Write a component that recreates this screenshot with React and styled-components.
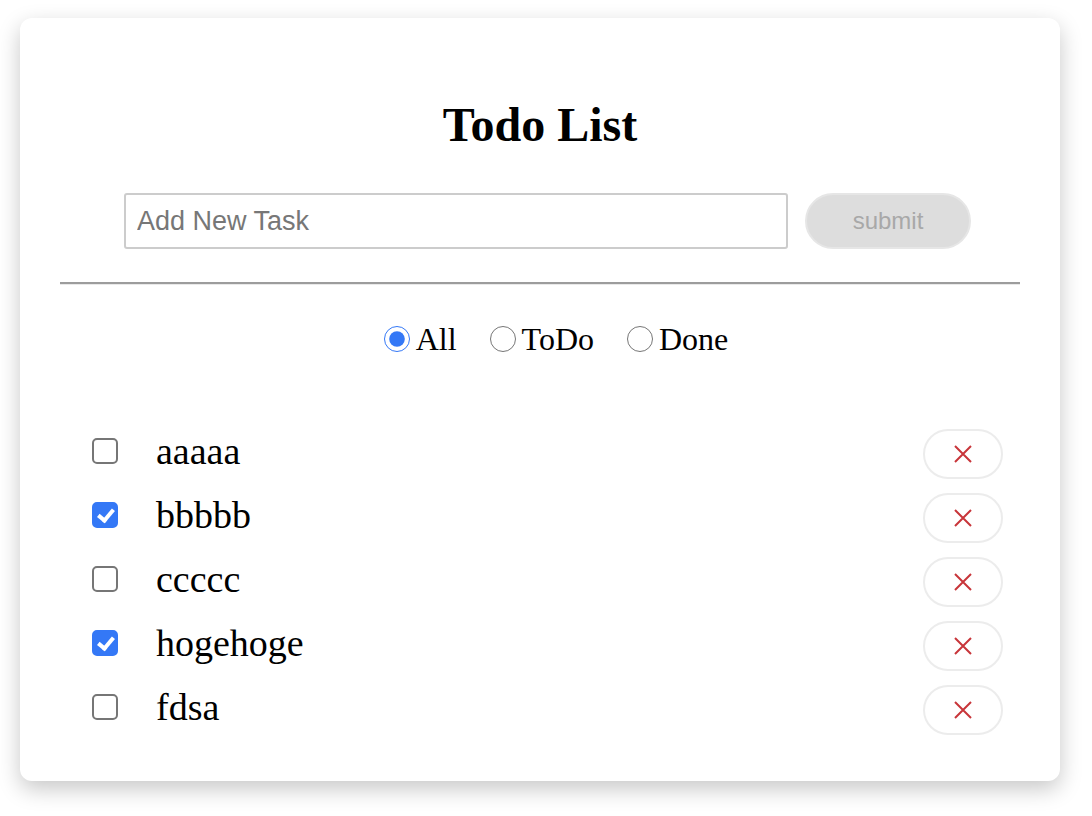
import React, { useState } from "react";
import styled, { createGlobalStyle } from "styled-components";

const Global = createGlobalStyle`
	body {
		margin: 0;
		padding-bottom: 34px;
		background: #fff;
		font-family: "Liberation Serif", "Times New Roman", serif;
	}
`;

const Card = styled.div`
	width: 1040px;
	margin: 18px 0 0 20px;
	box-sizing: border-box;
	padding: 79px 40px 42px;
	background: #fff;
	border-radius: 12px;
	box-shadow: 0 8px 22px rgba(0, 0, 0, 0.22);
`;

const Title = styled.h1`
	margin: 0;
	height: 56px;
	line-height: 56px;
	font-size: 48px;
	font-weight: bold;
	text-align: center;
`;

const Form = styled.form`
	display: flex;
	align-items: center;
	gap: 17px;
	margin-top: 40px;
	padding-left: 64px;
`;

const Input = styled.input`
	width: 664px;
	height: 56px;
	box-sizing: border-box;
	padding: 0 11px;
	border: 2px solid #ccc;
	border-radius: 3px;
	font-family: "Liberation Sans", Arial, sans-serif;
	font-size: 27px;
	outline: none;
	&::placeholder {
		color: #777;
	}
`;

const Submit = styled.button`
	width: 166px;
	height: 56px;
	border: 2px solid #e6e6e6;
	border-radius: 28px;
	background: #dddddd;
	color: #a8a8a8;
	font-family: "Liberation Sans", Arial, sans-serif;
	font-size: 24px;
`;

const Rule = styled.hr`
	margin: 33px 0 0;
	border: 0;
	border-top: 2px solid #9c9c9c;
	border-bottom: 1px solid #e9e9e9;
`;

const Filters = styled.div`
	display: flex;
	justify-content: center;
	gap: 33px;
	height: 40px;
	margin-top: 34px;
	padding-left: 32px;
`;

const FilterLabel = styled.label`
	display: flex;
	align-items: center;
	gap: 6px;
	font-size: 32px;
`;

const Radio = styled.input`
	width: 26px;
	height: 26px;
	margin: 0;
	accent-color: #3478f6;
`;

const List = styled.ul`
	list-style: none;
	margin: 60px 0 0;
	padding: 0;
`;

const Row = styled.li`
	display: flex;
	align-items: center;
	height: 64px;
	padding: 0 17px 0 32px;
`;

const Check = styled.input`
	appearance: none;
	position: relative;
	width: 26px;
	height: 26px;
	box-sizing: border-box;
	margin: 0 38px 0 0;
	border: 2px solid #767676;
	border-radius: 5px;
	background: #fff;
	&:checked {
		border-color: #3478f6;
		background: #3478f6;
	}
	&:checked::after {
		content: "";
		position: absolute;
		left: 7px;
		top: 2px;
		width: 6px;
		height: 12px;
		border: solid #fff;
		border-width: 0 4px 4px 0;
		transform: rotate(40deg);
	}
`;

const Name = styled.span`
	flex: 1;
	font-size: 38px;
`;

const Delete = styled.button`
	display: flex;
	align-items: center;
	justify-content: center;
	width: 80px;
	height: 50px;
	margin-top: 6px;
	border: 2px solid #ececec;
	border-radius: 25px;
	background: #fff;
	padding: 0;
`;

const Cross = () => (
	<svg width="20" height="20" viewBox="0 0 20 20">
		<path d="M2 2L18 18M18 2L2 18" stroke="#c8353a" strokeWidth="2" />
	</svg>
);

const initial = [
	{ name: "aaaaa", done: false },
	{ name: "bbbbb", done: true },
	{ name: "ccccc", done: false },
	{ name: "hogehoge", done: true },
	{ name: "fdsa", done: false },
];

export default function App() {
	const [todos, setTodos] = useState(initial);
	const [filter, setFilter] = useState("all");

	const toggle = i =>
		setTodos(todos.map((t, j) => (j === i ? { ...t, done: !t.done } : t)));

	return (
		<>
			<Global />
			<Card>
				<Title>Todo List</Title>
				<Form onSubmit={e => e.preventDefault()}>
					<Input placeholder="Add New Task" />
					<Submit type="submit" disabled>submit</Submit>
				</Form>
				<Rule />
				<Filters>
					{[
						["all", "All"],
						["todo", "ToDo"],
						["done", "Done"],
					].map(([v, label]) => (
						<FilterLabel key={v}>
							<Radio
								type="radio"
								name="filter"
								checked={filter === v}
								onChange={() => setFilter(v)}
							/>
							{label}
						</FilterLabel>
					))}
				</Filters>
				<List>
					{todos.map((t, i) => (
						<Row key={t.name}>
							<Check type="checkbox" checked={t.done} onChange={() => toggle(i)} />
							<Name>{t.name}</Name>
							<Delete type="button">
								<Cross />
							</Delete>
						</Row>
					))}
				</List>
			</Card>
		</>
	);
}
